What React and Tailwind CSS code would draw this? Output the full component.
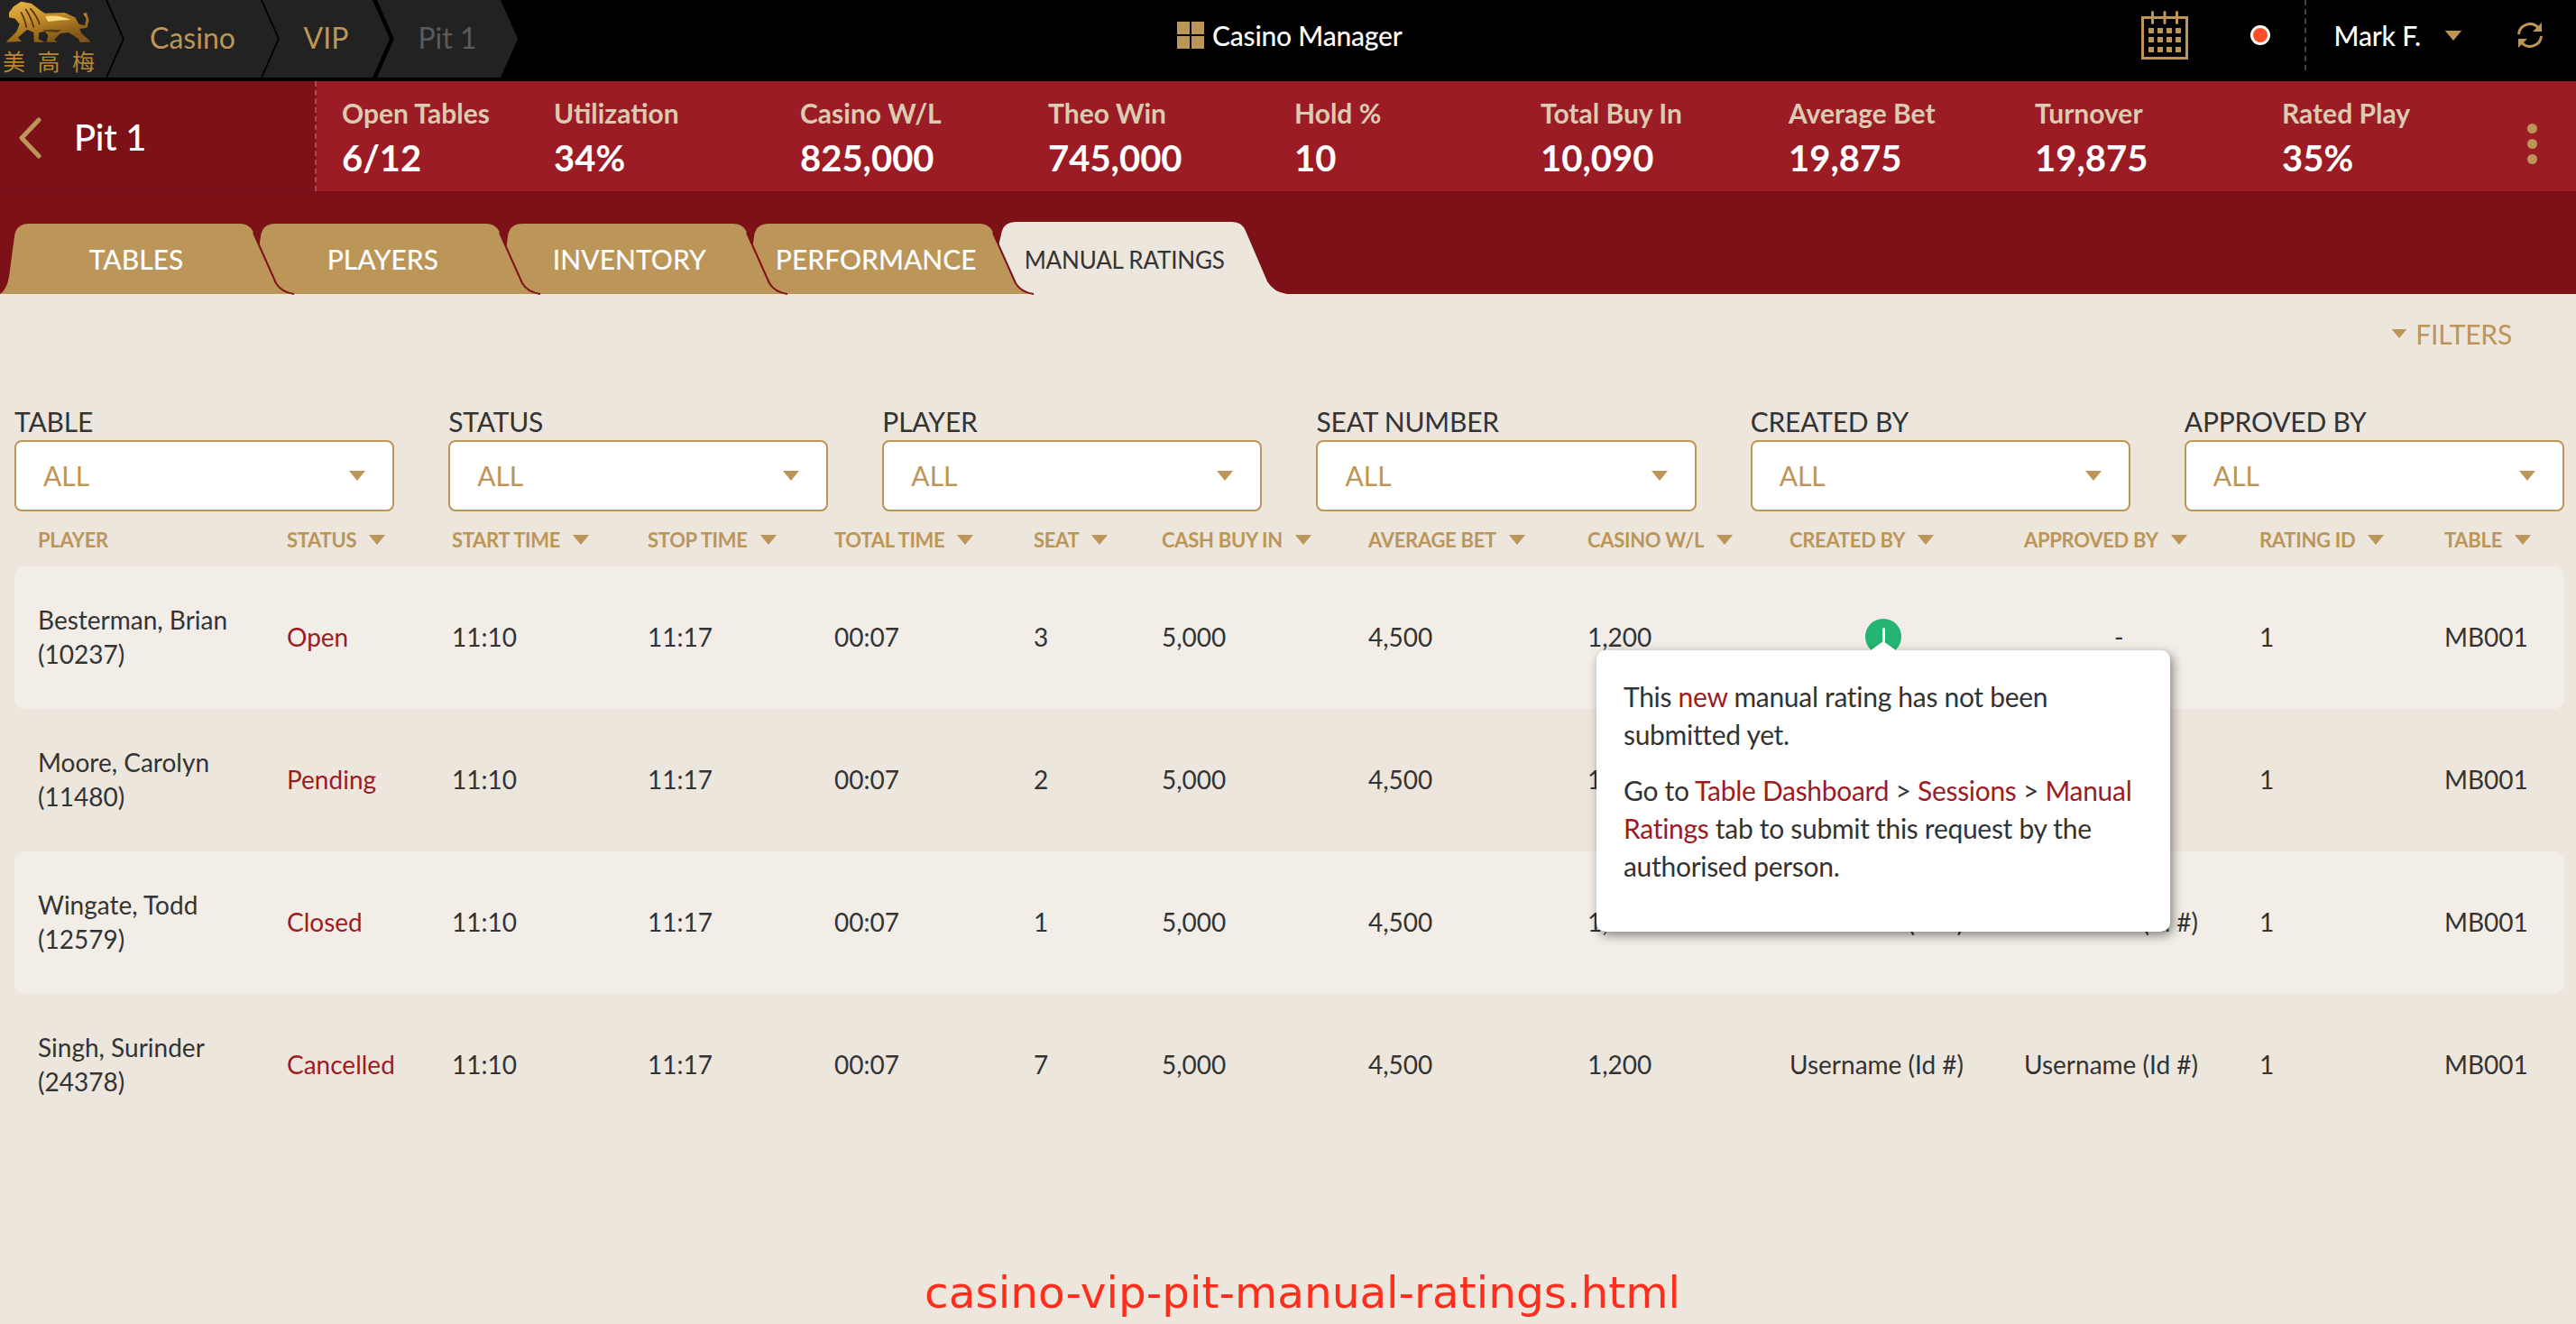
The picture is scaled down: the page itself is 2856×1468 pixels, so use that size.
import React from 'react';

const stats = [
  ['Open Tables', '6/12', 'w-[235px]'],
  ['Utilization', '34%', 'w-[273px]'],
  ['Casino W/L', '825,000', 'w-[275px]'],
  ['Theo Win', '745,000', 'w-[273px]'],
  ['Hold %', '10', 'w-[273px]'],
  ['Total Buy In', '10,090', 'w-[275px]'],
  ['Average Bet', '19,875', 'w-[273px]'],
  ['Turnover', '19,875', 'w-[274px]'],
  ['Rated Play', '35%', 'w-[272px]'],
];

const tabs = [
  ['TABLES', 'z-40'],
  ['PLAYERS', 'z-30'],
  ['INVENTORY', 'z-20'],
  ['PERFORMANCE', 'z-10'],
];
const filters = ['TABLE', 'STATUS', 'PLAYER', 'SEAT NUMBER', 'CREATED BY', 'APPROVED BY'];

const columns = [
  ['PLAYER', false],
  ['STATUS', true],
  ['START TIME', true],
  ['STOP TIME', true],
  ['TOTAL TIME', true],
  ['SEAT', true],
  ['CASH BUY IN', true],
  ['AVERAGE BET', true],
  ['CASINO W/L', true],
  ['CREATED BY', true],
  ['APPROVED BY', true],
  ['RATING ID', true],
  ['TABLE', true],
];

const rows = [
  { name: 'Besterman, Brian', id: '(10237)', status: 'Open', seat: '3', isNew: true, approved: '-' },
  { name: 'Moore, Carolyn', id: '(11480)', status: 'Pending', seat: '2', approved: '-' },
  { name: 'Wingate, Todd', id: '(12579)', status: 'Closed', seat: '1', approved: 'Username (Id #)' },
  { name: 'Singh, Surinder', id: '(24378)', status: 'Cancelled', seat: '7', approved: 'Username (Id #)' },
];

const gridCols = 'grid grid-cols-[276px_183px_217px_207px_221px_142px_229px_243px_224px_260px_261px_205px_1fr] pl-[26px]';

function Caret({ className }) {
  return (
    <svg viewBox="0 0 20 12" className={className}>
      <path d="M0 0h20L10 12z" fill="#bc9558" />
    </svg>
  );
}

function Logo() {
  return (
    <div className="flex flex-col">
      <svg viewBox="0 0 390 150" className="w-[130px] h-[50px] shrink-0">
        <defs>
          <linearGradient id="gold" x1="0" y1="0" x2="0.5" y2="1">
            <stop offset="0" stopColor="#e9b94c" />
            <stop offset="0.45" stopColor="#c8902a" />
            <stop offset="1" stopColor="#80561a" />
          </linearGradient>
        </defs>
        <path
          fill="url(#gold)"
          d="M30 42 L45 22 L70 5 L105 12 L135 35 L150 44 L215 42 L250 58 L262 80 L282 85 L287 62 L276 45 L288 42 L296 68 L290 92 L265 96 L272 112 L295 132 L300 140 L265 140 L262 130 L228 108 L200 112 L180 132 L192 140 L155 140 L160 118 L150 105 L130 108 L128 130 L150 140 L113 140 L112 108 L90 98 L60 125 L72 138 L20 140 L55 105 L65 80 L50 62 L30 58 Z"
        />
        <path d="M150 55 Q190 46 235 66 Q200 66 160 72 Z" fill="#f6d77c" />
        <path d="M70 40 Q85 70 88 92 M85 30 Q105 60 112 92 M100 28 Q122 50 132 82" fill="none" stroke="#4d3208" strokeWidth="5" />
        <path d="M140 100 Q170 96 205 100 L190 108 L150 104 Z" fill="#5a3c0e" />
      </svg>
      <div className="mt-[2px] pl-[3px] text-[25px] leading-[30px] tracking-[13.5px] text-[#b8862e] font-['Noto_Sans_CJK_TC',sans-serif] whitespace-nowrap">美高梅</div>
    </div>
  );
}

function Crumb({ label, className, textClass }) {
  return (
    <div className={`h-[86px] pb-[2px] bg-[#222222] flex items-center justify-center [clip-path:polygon(0_0,calc(100%-19px)_0,100%_50%,calc(100%-19px)_100%,0_100%,19px_50%)] ${className}`}>
      <span className={`text-[32px] ${textClass}`}>{label}</span>
    </div>
  );
}

function TopBar() {
  return (
    <div className="h-[90px] bg-black flex items-start">
      <div className="w-[1305px] flex">
        <div className="h-[86px] w-[136px] bg-[#222222] overflow-hidden [clip-path:polygon(0_0,calc(100%-19px)_0,100%_50%,calc(100%-19px)_100%,0_100%)]">
          <Logo />
        </div>
        <Crumb label="Casino" className="w-[189px] -ml-[17px]" textClass="text-[#bc9558]" />
        <Crumb label="VIP" className="w-[141px] -ml-[17px]" textClass="text-[#bc9558]" />
        <Crumb label="Pit 1" className="w-[156px] -ml-[14px]" textClass="text-[#5a5a5a]" />
      </div>
      <div className="h-[78px] flex items-center gap-[9px]">
        <div className="grid grid-cols-2 gap-[2px] w-[30px] h-[30px]">
          <span className="bg-[#bc9558]" />
          <span className="bg-[#bc9558]" />
          <span className="bg-[#bc9558]" />
          <span className="bg-[#bc9558]" />
        </div>
        <span className="text-[30px] font-medium tracking-[-0.2px] text-white">Casino Manager</span>
      </div>
      <div className="flex-1 flex items-center justify-end h-[78px] pr-[36px]">
        <svg viewBox="0 0 52 54" className="w-[52px] h-[54px]" fill="#bc9558">
          <path d="M0 6h52v48H0zM3 9v42h46V9z" fillRule="evenodd" />
          <path d="M0 6h52v3H0zM0 51h52v3H0z" />
          <rect x="11" y="0" width="3" height="15" rx="1.5" />
          <rect x="24.5" y="0" width="3" height="15" rx="1.5" />
          <rect x="38" y="0" width="3" height="15" rx="1.5" />
          {[8, 18, 28, 38].map((x) =>
            [19, 29, 40].map((y) => <rect key={`${x}-${y}`} x={x} y={y} width="6" height="6" />)
          )}
        </svg>
        <span className="ml-[69px] w-[22px] h-[22px] rounded-full bg-[#fb4f28] border-[3px] border-white" />
        <div className="ml-[38px] h-[78px] self-start border-l-2 border-dashed border-[#444444]" />
        <span className="ml-[31px] text-[30px] font-medium tracking-[-0.2px] text-white leading-none">Mark F.</span>
        <Caret className="ml-[26px] w-[20px] h-[11px]" />
        <svg viewBox="0 0 30 30" className="ml-[60px] w-[30px] h-[30px]" fill="#bc9558">
          <path d="M2.5 14 A12.5 12.5 0 0 1 24 6.5 M27.5 16 A12.5 12.5 0 0 1 6 23.5" fill="none" stroke="#bc9558" strokeWidth="3" />
          <path d="M28 1v10H18zM2 29V19h10z" />
        </svg>
      </div>
    </div>
  );
}

function StatBar() {
  return (
    <div className="h-[126px] flex bg-[#9b1c24] border-b-4 border-[#7a1118]">
      <div className="w-[351px] bg-[#7d1118] border-r-2 border-dashed border-[#b5454c] flex items-center pl-[20px]">
        <svg viewBox="0 0 26 46" className="w-[26px] h-[46px] mt-[4px]">
          <path d="M23 3 L4 23 L23 43" fill="none" stroke="#bc9558" strokeWidth="5" strokeLinecap="round" strokeLinejoin="round" />
        </svg>
        <span className="ml-[36px] mt-[2px] text-[40px] font-medium tracking-[-0.3px] text-white">Pit 1</span>
      </div>
      <div className="flex flex-1 pl-[28px]">
        {stats.map(([label, value, width]) => (
          <div key={label} className={`${width} flex flex-col pt-[14px]`}>
            <span className="text-[30px] leading-[42px] font-bold text-[#dccbb3] whitespace-nowrap">{label}</span>
            <span className="text-[40px] leading-[50px] mt-[4px] font-bold text-white whitespace-nowrap">{value}</span>
          </div>
        ))}
        <div className="flex flex-col items-center gap-[6px] pt-[47px]">
          <span className="w-[11px] h-[11px] rounded-full bg-[#bc9558]" />
          <span className="w-[11px] h-[11px] rounded-full bg-[#bc9558]" />
          <span className="w-[11px] h-[11px] rounded-full bg-[#bc9558]" />
        </div>
      </div>
    </div>
  );
}

function Tab({ label, z }) {
  return (
    <div className={`relative w-[326px] h-[78px] -mr-[52.6px] ${z}`}>
      <svg viewBox="0 0 326 78" className="absolute inset-0 w-full h-full overflow-visible">
        <path d="M0 78 C9 72 10 60 12 44 L16 14 Q18 0 32 0 L266 0 Q277 0 281 10 L306 66 Q312 76 326 78 Z" fill="#bc9558" />
        <path d="M281 10 L306 66 Q312 76 326 78" fill="none" stroke="#7d1118" strokeWidth="2" />
      </svg>
      <div className="relative w-[302px] h-full flex items-center justify-center text-[30px] font-medium text-white">{label}</div>
    </div>
  );
}

function TabBar() {
  return (
    <div className="h-[110px] bg-[#7d1118] pt-[32px] flex items-start">
      {tabs.map(([label, z]) => (
        <Tab key={label} label={label} z={z} />
      ))}
      <div className="relative w-[333px] h-[80px] -mt-[2px]">
        <svg viewBox="0 0 333 80" className="absolute inset-0 w-full h-full">
          <path d="M0 80 L16 14 Q18 0 32 0 L272 0 Q283 0 287 10 L311 66 Q318 78 333 80 Z" fill="#ede6dd" />
        </svg>
        <div className="relative w-[306px] h-full flex items-center justify-center pt-[4px] text-[26px] tracking-[-0.2px] text-[#333333]">MANUAL RATINGS</div>
      </div>
    </div>
  );
}

function FilterBox({ label }) {
  return (
    <div className="flex flex-col">
      <span className="text-[30px] leading-[36px] text-[#333333] tracking-[-0.2px]">{label}</span>
      <div className="mt-[3px] h-[79px] bg-white border-2 border-[#bc9558] rounded-[8px] flex items-center justify-between pl-[30px] pr-[30px]">
        <span className="text-[30px] text-[#bc9558]">ALL</span>
        <Caret className="w-[18px] h-[11px]" />
      </div>
    </div>
  );
}

function Tooltip() {
  return (
    <div className="absolute left-[-214px] top-[35px] z-50 w-[636px] h-[312px] bg-white rounded-[10px] shadow-[3px_4px_12px_rgba(0,0,0,0.45)] px-[30px] pt-[30px] text-[30px] leading-[42px] text-[#333333] tracking-[-0.3px]">
      <span className="absolute left-[304px] -top-[10px] w-0 h-0 border-x-[14px] border-x-transparent border-b-[10px] border-b-white" />
      <p>
        This <span className="text-[#9b1c24]">new</span> manual rating has not been submitted yet.
      </p>
      <p className="mt-[20px]">
        Go to <span className="text-[#9b1c24]">Table Dashboard</span> &gt; <span className="text-[#9b1c24]">Sessions</span> &gt; <span className="text-[#9b1c24]">Manual Ratings</span> tab to submit this request by the authorised person.
      </p>
    </div>
  );
}

function Row({ row, striped }) {
  return (
    <div className={`${gridCols} h-[158px] pb-[3px] items-center text-[28px] leading-[38px] text-[#333333] rounded-[12px] ${striped ? 'bg-[#f2ede6]' : ''}`}>
      <div>
        <div>{row.name}</div>
        <div>{row.id}</div>
      </div>
      <div className="text-[#9b1c24]">{row.status}</div>
      <div>11:10</div>
      <div>11:17</div>
      <div>00:07</div>
      <div>{row.seat}</div>
      <div>5,000</div>
      <div>4,500</div>
      <div>1,200</div>
      {row.isNew ? (
        <div className="relative pl-[84px]">
          <div className="w-[40px] h-[40px] rounded-full bg-[#23b574] flex justify-center pt-[10px]">
            <span className="w-[3px] h-[16px] bg-white rounded-full" />
          </div>
          <Tooltip />
        </div>
      ) : (
        <div>Username (Id #)</div>
      )}
      {row.approved === '-' ? <div className="pl-[100px]">-</div> : <div>{row.approved}</div>}
      <div>1</div>
      <div>MB001</div>
    </div>
  );
}

export default function App() {
  return (
    <div className="w-[2856px] h-[1468px] flex flex-col overflow-hidden bg-[#ede6dd] font-['Lato',sans-serif]">
      <TopBar />
      <StatBar />
      <TabBar />

      <main className="flex-1 flex flex-col">
        {/* Filters toggle */}
        <div className="h-[88px] flex items-center justify-end pr-[71px]">
          <Caret className="w-[18px] h-[10px]" />
          <span className="ml-[9px] text-[30px] text-[#bc9558] tracking-[-0.2px]">FILTERS</span>
        </div>

        <div className="grid grid-cols-6 gap-x-[60px] ml-[16px] mr-[13px] mt-[35px]">
          {filters.map((f) => (
            <FilterBox key={f} label={f} />
          ))}
        </div>

        {/* Table */}
        <div className="ml-[16px] mr-[13px]">
          <div className={`${gridCols} h-[61px] pt-[2px] items-center text-[22px] font-bold text-[#bc9558] tracking-[-0.3px]`}>
            {columns.map(([label, sort]) => (
              <div key={label} className="flex items-center whitespace-nowrap">
                {label}
                {sort && <Caret className="ml-[13px] w-[20px] h-[11px]" />}
              </div>
            ))}
          </div>
          {rows.map((row, i) => (
            <Row key={row.name} row={row} striped={i % 2 === 0} />
          ))}
        </div>

        <div className="mt-auto h-[70px] pl-[32px] flex justify-center items-center text-[48.5px] text-[#ff2d1c] font-['DejaVu_Sans',sans-serif]">
          casino-vip-pit-manual-ratings.html
        </div>
      </main>
    </div>
  );
}
